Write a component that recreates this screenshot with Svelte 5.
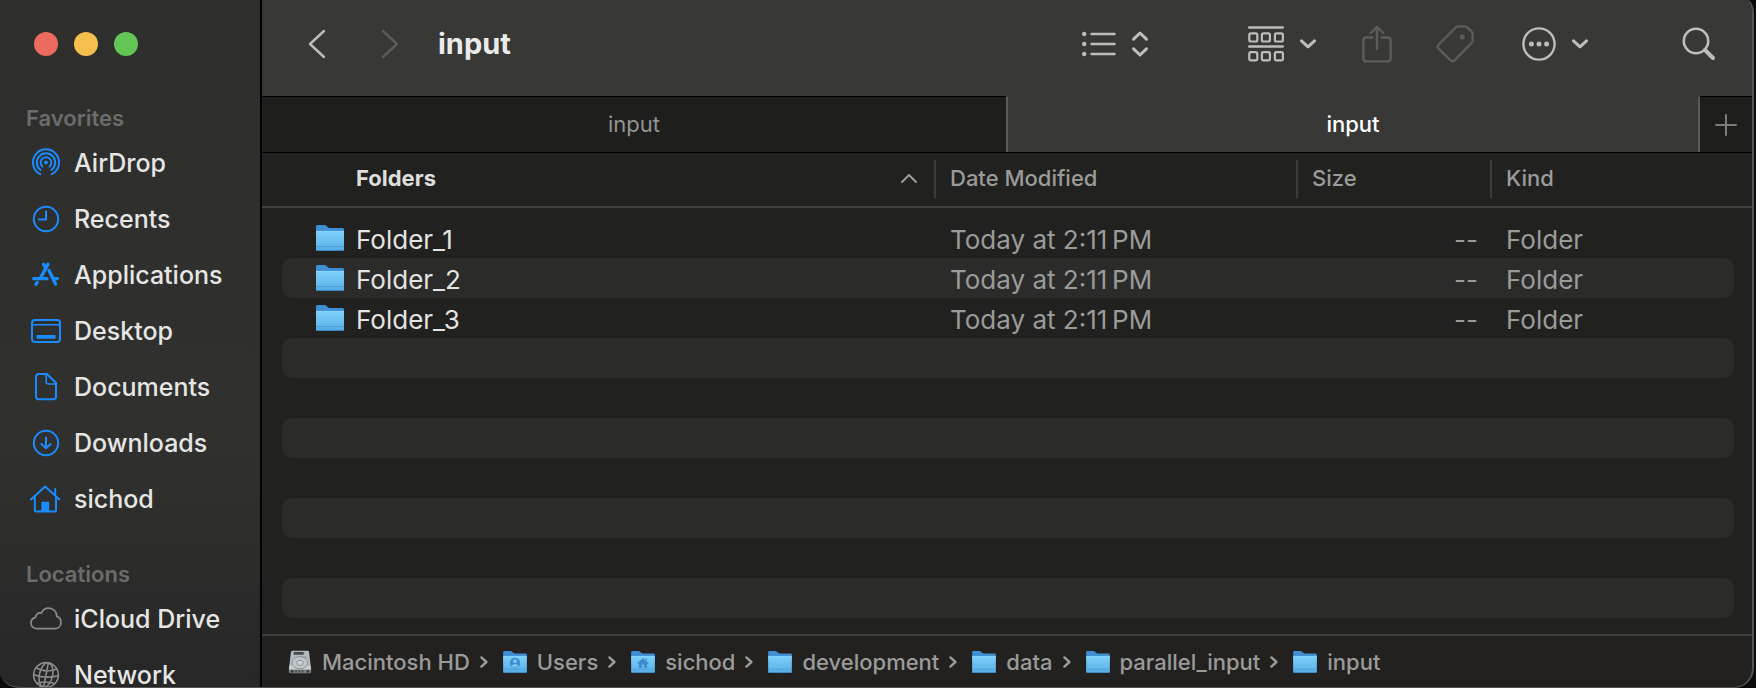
<script lang="ts">
  const favorites = [
    { name: 'AirDrop', icon: 'airdrop' },
    { name: 'Recents', icon: 'clock' },
    { name: 'Applications', icon: 'apps' },
    { name: 'Desktop', icon: 'desktop' },
    { name: 'Documents', icon: 'document' },
    { name: 'Downloads', icon: 'download' },
    { name: 'sichod', icon: 'home' },
  ];
  const locations = [
    { name: 'iCloud Drive', icon: 'cloud' },
    { name: 'Network', icon: 'globe' },
  ];
  const sections = [
    { title: 'Favorites', items: favorites, tone: 'blue' },
    { title: 'Locations', items: locations, tone: 'grey' },
  ];

  const folders = ['Folder_1', 'Folder_2', 'Folder_3'];
  const emptyRows = Array.from({ length: 7 });
  // narrow no-break space before PM
  const modified = 'Today at 2:11\u202fPM';

  const path = [
    { name: 'Macintosh HD', kind: 'disk' },
    { name: 'Users', kind: 'users' },
    { name: 'sichod', kind: 'home' },
    { name: 'development', kind: 'plain' },
    { name: 'data', kind: 'plain' },
    { name: 'parallel_input', kind: 'plain' },
    { name: 'input', kind: 'plain' },
  ];

  let activeTab = $state(1);
</script>

{#snippet folder(kind: string)}
  <svg class="folder" viewBox="0 0 28 26" aria-hidden="true">
    <defs>
      <linearGradient id="front" x1="0" y1="0" x2="0" y2="1">
        <stop offset="0" stop-color="#7ed0fa" />
        <stop offset="1" stop-color="#58aee6" />
      </linearGradient>
    </defs>
    <path d="M0 1.5Q0 0 1.5 0H8.5Q9.8 0 10.8 1.2L11.8 2.2Q12.6 3 14 3H26.5Q28 3 28 4.5V12H0Z" fill="#3f8fd2" />
    <path d="M0 6H28V24.6Q28 26 26.6 26H1.4Q0 26 0 24.6Z" fill="url(#front)" />
    <path d="M0 6.4H28" stroke="#8bd6fc" stroke-width=".8" />
    <path d="M0 21.6H28" stroke="#4598d6" stroke-width=".8" />
    <path d="M.6 25.4H27.4" stroke="#3c86bf" stroke-width="1" />
    {#if kind === 'users'}
      <circle cx="14" cy="14" r="6" fill="#3f8ccd" />
      <circle cx="14" cy="12" r="2.3" fill="#79c8f5" />
      <path d="M9.8 17.6Q14 13 18.2 17.6Q14 20.8 9.8 17.6Z" fill="#79c8f5" />
    {:else if kind === 'home'}
      <path d="M7.2 14.6L14 8.4L20.8 14.6L19.8 15.6L18.8 14.8V20H15.4V16H12.6V20H9.2V14.8L8.2 15.6ZM17 8.8H18.8V11.4L17 10Z" fill="#3f8ccd" />
    {/if}
  </svg>
{/snippet}

{#snippet disk()}
  <svg class="disk" viewBox="0 0 26 26" aria-hidden="true">
    <path d="M3.2 1.6Q3.4.4 4.6.4H21.4Q22.6.4 22.8 1.6L25 20H1Z" fill="#b4babe" />
    <path d="M1 20L1.6 16.5L24.4 16.5L25 20V21.4H1Z" fill="#c8cdd0" />
    <path d="M1 20.6H25V23.4Q25 24.6 23.8 24.6H2.2Q1 24.6 1 23.4Z" fill="#7e8386" />
    <path d="M3 22.6H6M8 22.6H9.5M11.5 22.6H13M15 22.6H16.5M20 22.6H23" stroke="#33383a" stroke-width="2.4" />
    <rect x="6" y="1.6" width="11" height="3" fill="#44494c" />
    <ellipse cx="12.8" cy="13.2" rx="8.6" ry="6.6" fill="#bfc6ca" stroke="#858c91" stroke-width=".9" />
    <ellipse cx="13" cy="13.4" rx="3.6" ry="2.8" fill="#cdd3d6" stroke="#858c91" stroke-width=".9" />
    <path d="M14 7.2H20.5" stroke="#858c91" stroke-width=".9" />
  </svg>
{/snippet}

{#snippet icon(name: string)}
  <svg class="side-icon" viewBox="0 0 32 32" aria-hidden="true">
    {#if name === 'airdrop'}
      <circle cx="16" cy="16.5" r="1.9" fill="currentColor" stroke="none" />
      <path d="M10.2 28.2A13.1 13.1 0 1 1 21.8 28.2" />
      <path d="M10.7 24A9.2 9.2 0 1 1 21.3 24" />
      <path d="M12.4 20.6A5.4 5.4 0 1 1 19.6 20.6" />
    {:else if name === 'clock'}
      <circle cx="16" cy="17" r="12.2" />
      <path d="M16 9.5V17.5H9" />
    {:else if name === 'apps'}
      <path d="M13.6 6.4L15.6 9.6M18 6.2L10.4 20.2M19 12.6L25.6 26M3.8 20.6H17M23.5 20.6H27.4M6 26.2L7.2 24.6" stroke-width="3.4" />
    {:else if name === 'desktop'}
      <rect x="2" y="6" width="28" height="22" rx="3" />
      <path d="M2.5 10.8H29.5" stroke-width="1.4" />
      <rect x="6.4" y="21" width="19.2" height="3.8" rx="1" fill="currentColor" stroke="none" />
    {:else if name === 'document'}
      <path d="M9 4H17L26 13V26.6Q26 29.2 23.4 29.2H8.6Q6 29.2 6 26.6V7Q6 4 9 4Z" />
      <path d="M16.2 4.4V12Q16.2 14 18.2 14H25.6" stroke-width="1.6" />
    {:else if name === 'download'}
      <circle cx="16" cy="17" r="12.2" />
      <path d="M16 11.4V22.2M11.4 18L16 22.4L20.6 18" />
    {:else if name === 'home'}
      <path d="M1 17.4L15.2 4.6L29.4 17.4M4.8 14.4V28.4Q4.8 29.4 5.8 29.4H25Q26 29.4 26 28.4V14.4M25.2 12.9V7" />
      <path d="M11.4 29.4V21Q11.4 19.8 12.6 19.8H18Q19.2 19.8 19.2 21V29.4Z" fill="currentColor" stroke="none" />
    {:else if name === 'cloud'}
      <path d="M7.4 26.6C3.6 26.6 1 24.2 1 21C1 18 3 16 5.6 15.4C5.4 12.4 8.6 10 11.4 11.2C12.6 8 15.4 6.2 18.6 6.2C23.4 6.2 26.8 9.6 26.8 14.4C29.4 15.4 31 17.6 31 20.4C31 24 28.4 26.6 24.8 26.6Z" stroke-width="1.7" />
    {:else if name === 'globe'}
      <g stroke-width="1.6">
        <circle cx="16" cy="17" r="12.4" />
        <ellipse cx="16" cy="17" rx="6.6" ry="12.4" transform="rotate(12 16 17)" />
        <path d="M18.4 4.9L13.6 29.1M6 9.7Q14.5 15.5 26.8 11.1M3.8 16.7Q15 20.9 28.2 17.9M7 25.3Q15 22.5 25 25.5" />
      </g>
    {/if}
  </svg>
{/snippet}

{#snippet chevron()}
  <svg class="chevron" viewBox="0 0 16 10" aria-hidden="true"><path d="M1.5 1.8L8 7.8L14.5 1.8" /></svg>
{/snippet}

<div class="window">
  <aside class="sidebar">
    <div class="lights">
      <button class="light red" aria-label="Close"></button>
      <button class="light yellow" aria-label="Minimize"></button>
      <button class="light green" aria-label="Zoom"></button>
    </div>
    {#each sections as section}
      <nav class="section {section.tone}" aria-label={section.title}>
        <h2>{section.title}</h2>
        {#each section.items as item}
          <a href="#{item.icon}">{@render icon(item.icon)}<span>{item.name}</span></a>
        {/each}
      </nav>
    {/each}
  </aside>

  <main class="main">
    <header class="toolbar">
      <button class="tool" aria-label="Back">
        <svg width="18" height="30" viewBox="0 0 18 30"><path d="M16 2L2 15L16 28" /></svg>
      </button>
      <button class="tool forward" aria-label="Forward" disabled>
        <svg width="18" height="30" viewBox="0 0 18 30"><path d="M2 2L16 15L2 28" /></svg>
      </button>
      <h1>input</h1>
      <button class="tool view" aria-label="View as list">
        <svg width="34" height="26" viewBox="0 0 34 26">
          <path d="M9.5 3H32.5M9.5 13H32.5M9.5 23H32.5" />
          <g fill="currentColor" stroke="none">
            <circle cx="2.2" cy="3" r="2.2" /><circle cx="2.2" cy="13" r="2.2" /><circle cx="2.2" cy="23" r="2.2" />
          </g>
        </svg>
        <svg width="16" height="26" viewBox="0 0 16 26"><path d="M1.6 8.2L8 2L14.4 8.2M1.6 17.8L8 24L14.4 17.8" stroke-width="3" /></svg>
      </button>
      <button class="tool group" aria-label="Group">
        <svg width="36" height="36" viewBox="0 0 36 36">
          <path d="M1.2 1.5H34.8M1.2 20.5H34.8" />
          <g stroke-width="2.2">
            {#each [7.3, 26.1] as y}
              {#each [1.3, 13.9, 26.9] as x}
                <rect {x} {y} width="8" height="8.2" rx="1.6" />
              {/each}
            {/each}
          </g>
        </svg>
        {@render chevron()}
      </button>
      <button class="tool share" aria-label="Share" disabled>
        <svg width="30" height="38" viewBox="0 0 30 38">
          <path d="M10.5 12.5H4.4Q1.4 12.5 1.4 15.5V33.4Q1.4 36.4 4.4 36.4H25.6Q28.6 36.4 28.6 33.4V15.5Q28.6 12.5 25.6 12.5H19.5M15 24V2M8.8 8L15 1.8L21.2 8" />
        </svg>
      </button>
      <button class="tool tag" aria-label="Tags" disabled>
        <svg width="38" height="38" viewBox="0 0 38 38">
          <path d="M20 2.4Q21.2 1.4 22.6 1.4H28.4Q30.4 1.4 31.6 2.6L35.4 6.4Q36.6 7.6 36.6 9.4V15.4Q36.6 17 35.4 18.2L18.6 35.4Q16.6 37.2 14.6 35.4L2.6 23.6Q.6 21.6 2.6 19.6Z" />
          <circle cx="26.3" cy="12" r="2.5" fill="currentColor" stroke="none" />
        </svg>
      </button>
      <button class="tool more" aria-label="More actions">
        <svg width="34" height="34" viewBox="0 0 34 34">
          <circle cx="17" cy="17" r="15.6" />
          <g fill="currentColor" stroke="none">
            <circle cx="9.4" cy="17" r="2.5" /><circle cx="17" cy="17" r="2.5" /><circle cx="24.6" cy="17" r="2.5" />
          </g>
        </svg>
        {@render chevron()}
      </button>
      <button class="tool search" aria-label="Search">
        <svg width="34" height="34" viewBox="0 0 34 34">
          <circle cx="14" cy="14" r="12.2" stroke-width="2.6" />
          <path d="M23 23L31 31" stroke-width="4" />
        </svg>
      </button>
    </header>

    <div class="tabs">
      {#each ['input', 'input'] as tab, i}
        <button class="tab" class:active={activeTab === i} onclick={() => (activeTab = i)}>{tab}</button>
      {/each}
      <button class="new-tab" aria-label="New tab">
        <svg width="22" height="22" viewBox="0 0 22 22"><path d="M11 1V21M1 11H21" /></svg>
      </button>
    </div>

    <div class="list">
      <table>
        <thead>
          <tr>
            <th class="name">
              <div>
                Folders
                <svg width="16" height="10" viewBox="0 0 16 10" aria-hidden="true"><path d="M1 9L8 2L15 9" /></svg>
              </div>
            </th>
            <th class="date"><div>Date Modified</div></th>
            <th class="size"><div>Size</div></th>
            <th class="kind"><div>Kind</div></th>
          </tr>
        </thead>
        <tbody>
          {#each folders as name}
            <tr>
              <td><div class="entry">{@render folder('plain')}<span>{name}</span></div></td>
              <td>{modified}</td>
              <td class="size">--</td>
              <td>Folder</td>
            </tr>
          {/each}
          {#each emptyRows as _}
            <tr><td></td><td></td><td></td><td></td></tr>
          {/each}
        </tbody>
      </table>
    </div>

    <nav class="path" aria-label="Path">
      {#each path as step, i}
        {#if i > 0}
          <svg class="sep" viewBox="0 0 8 12" aria-hidden="true"><path d="M1.4 1.4L6.4 6L1.4 10.6" /></svg>
        {/if}
        <a href="#{step.name}">
          {#if step.kind === 'disk'}{@render disk()}{:else}{@render folder(step.kind)}{/if}
          <span>{step.name}</span>
        </a>
      {/each}
    </nav>
  </main>
</div>

<style>
  :global(body) {
    background: #0b0b0b;
  }
  .window {
    display: flex;
    position: relative;
    height: 100vh;
    margin-right: 2px;
    box-sizing: border-box;
    overflow: hidden;
    border-radius: 0 7px 20px 20px / 0 14px 20px 16px;
    background: #21211f;
    color: #dededd;
    font-family: Inter, 'Liberation Sans', sans-serif;
    font-size: 25px;
    font-weight: 500;
  }
  /* hairline around the window edge, above the panes */
  .window::after {
    content: '';
    position: absolute;
    inset: 0;
    border: 2px solid #545453;
    border-width: 0 2px 1px 0;
    border-radius: inherit;
    pointer-events: none;
  }
  button {
    border: 0;
    padding: 0;
    background: none;
    font: inherit;
    color: inherit;
  }
  a {
    color: inherit;
    text-decoration: none;
  }
  svg {
    display: block;
    flex: none;
    fill: none;
    stroke: currentColor;
    stroke-width: 2.4;
    stroke-linecap: round;
    stroke-linejoin: round;
  }

  .sidebar {
    flex: none;
    width: 260px;
    border-right: 2px solid #000;
    background: linear-gradient(#2e2e2c, #30302e 65%, #272727);
  }
  .lights {
    display: flex;
    gap: 16px;
    padding: 32px 34px 46px;
  }
  .light {
    width: 24px;
    height: 24px;
    border-radius: 50%;
  }
  .red { background: #ed6a5f; }
  .yellow { background: #f5be4f; }
  .green { background: #62c555; }
  .section {
    margin-bottom: 32px;
  }
  .section h2 {
    margin: 0;
    padding-left: 26px;
    font-size: 22px;
    font-weight: 600;
    line-height: 32px;
    color: #6c6c6b;
  }
  .section a {
    display: flex;
    align-items: center;
    gap: 12px;
    height: 56px;
    padding-left: 30px;
    color: #e6e6e5;
    white-space: nowrap;
  }
  .section span,
  .entry span {
    padding-top: 2px;
  }
  .side-icon {
    width: 32px;
    height: 32px;
    stroke-width: 2;
  }
  .blue .side-icon { color: #1a8cff; }
  .grey .side-icon { color: #8b8b8a; }

  .main {
    display: flex;
    flex: 1;
    flex-direction: column;
    min-width: 0;
  }
  .toolbar {
    display: flex;
    align-items: center;
    flex: none;
    height: 96px;
    padding: 0 38px 9px 46px;
    box-sizing: border-box;
    background: #383836;
    color: #bdbdbc;
  }
  .tool {
    display: flex;
    align-items: center;
    gap: 16px;
  }
  .tool:disabled { color: #5c5c5a; }
  .forward { margin-left: 55px; }
  .toolbar h1 {
    flex: 1;
    margin: 0 0 0 39px;
    font-size: 29px;
    font-weight: 700;
    color: #ebebea;
  }
  .group { margin-left: 100px; }
  .share { margin-left: 46px; }
  .tag { margin-left: 44px; }
  .more { margin-left: 48px; }
  .search { margin-left: 94px; }
  .chevron {
    width: 16px;
    height: 10px;
    stroke-width: 3;
  }

  .tabs {
    display: flex;
    flex: none;
    height: 57px;
    box-sizing: border-box;
    border-bottom: 1px solid #000;
    background: #1e1e1c;
    font-size: 22px;
    font-weight: 400;
  }
  .tab {
    flex: 746 1 0;
    padding-bottom: 2px;
    border-top: 1px solid #000;
    color: #949493;
  }
  .tab.active {
    flex-grow: 692;
    border-top-color: #383836;
    border-right: 2px solid #5a5a58;
    border-left: 2px solid #5a5a58;
    background: #383836;
    font-weight: 500;
    color: #fff;
  }
  .new-tab {
    display: grid;
    place-items: center;
    width: 54px;
    padding-right: 2px;
    border-top: 1px solid #000;
    color: #7d7d7c;
  }
  .new-tab svg { stroke-width: 2; }

  .list {
    flex: 1;
    min-height: 0;
    overflow: hidden;
  }
  table {
    width: 100%;
    table-layout: fixed;
    border-spacing: 0;
    color: #9b9b9a;
  }
  th {
    height: 53px;
    padding: 0;
    box-sizing: content-box;
    border-bottom: 2px solid #3f3f3e;
    font-size: 22px;
    font-weight: 500;
    text-align: left;
  }
  th div {
    display: flex;
    align-items: center;
    justify-content: space-between;
    height: 38px;
    margin-bottom: 2px;
    padding: 0 17px 2px 14px;
    box-sizing: border-box;
    border-left: 2px solid #3c3c3b;
  }
  th.name div {
    padding-left: 92px;
    border-left-color: transparent;
    font-weight: 700;
    color: #dededd;
  }
  th svg {
    stroke-width: 2;
    color: #9b9b9a;
  }
  th.date { width: 362px; }
  th.size { width: 194px; }
  th.kind { width: 264px; }
  tbody::before {
    content: '';
    display: block;
    height: 10px;
  }
  td {
    height: 40px;
    padding: 2px 0 0 16px;
    box-sizing: border-box;
    font-size: 26px;
    font-weight: 400;
    white-space: nowrap;
  }
  td:first-child {
    padding: 0 0 0 34px;
    border-left: 20px solid transparent;
    border-radius: 30px 0 0 30px / 10px 0 0 10px;
    background-clip: padding-box;
    color: #e4e4e3;
  }
  td:last-child {
    border-right: 20px solid transparent;
    border-radius: 0 30px 30px 0 / 0 10px 10px 0;
    background-clip: padding-box;
  }
  tr:nth-child(even) td {
    background-color: #2b2b2a;
  }
  .entry {
    display: flex;
    align-items: center;
    gap: 12px;
  }
  td.size {
    padding-right: 12px;
    text-align: right;
  }
  .folder,
  .disk {
    stroke: none;
    stroke-linecap: butt;
  }
  .folder {
    width: 28px;
    height: 26px;
  }

  .path {
    display: flex;
    align-items: center;
    flex: none;
    gap: 10px;
    height: 52px;
    padding-left: 26px;
    border-top: 2px solid #3f3f3e;
    background: #222120;
    font-size: 22px;
    color: #9b9b9a;
    white-space: nowrap;
  }
  .path a {
    display: flex;
    align-items: center;
    gap: 10px;
  }
  .path .folder {
    width: 24px;
    height: 22px;
  }
  .disk {
    width: 24px;
    height: 25px;
  }
  .sep {
    width: 8px;
    height: 12px;
    margin-right: 5px;
  }
</style>
